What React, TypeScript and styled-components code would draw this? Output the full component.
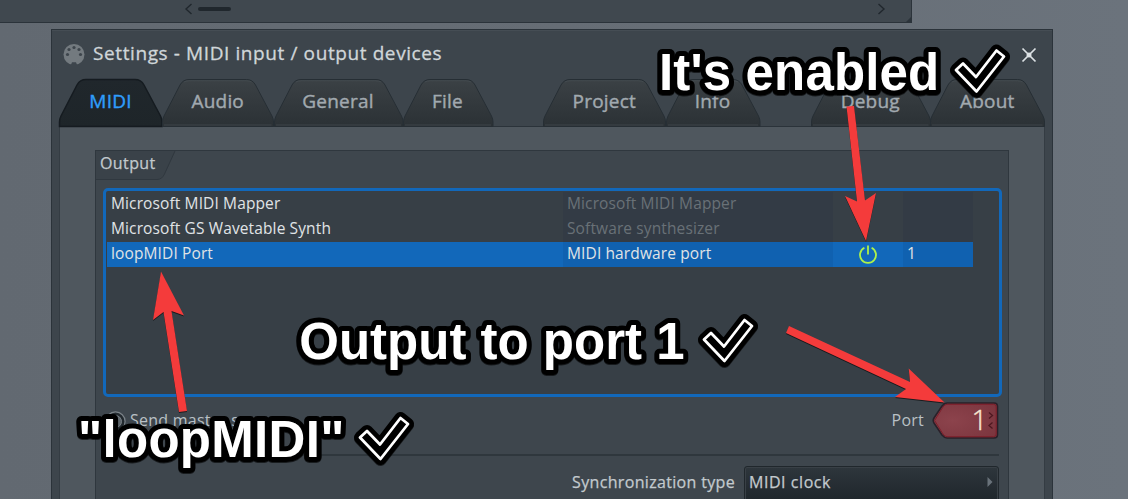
import React from "react";
import styled, { createGlobalStyle } from "styled-components";

const Global = createGlobalStyle`
  html, body { margin: 0; height: 100%; overflow: hidden; }
  * { box-sizing: border-box; }
  body { font-family: "Open Sans", "Noto Sans", sans-serif; }
`;

const Desktop = styled.div`
  position: relative;
  width: 1128px;
  height: 499px;
  overflow: hidden;
  background: linear-gradient(90deg, #626971 0%, #666d75 50%, #6b737c 100%);
`;

const BackWindow = styled.div`
  position: relative;
  display: flex;
  align-items: center;
  justify-content: space-between;
  width: 912px;
  height: 23px;
  padding: 0 25px 4px 184px;
  background: #40484f;
  border-right: 1px solid #2b333a;
  border-bottom: 1px solid #2b333a;
`;

const ResizeGrip = styled.svg`
  position: absolute;
  right: 0;
  bottom: 0;
`;

const ScrollLeft = styled.div`
  display: flex;
  align-items: center;
  gap: 5px;
`;

const Thumb = styled.div`
  width: 33px;
  height: 4px;
  border-radius: 2px;
  background: #20272d;
`;

const Window = styled.div`
  width: 1002px;
  height: 480px;
  margin: 6px 0 0 51px;
  padding: 0 7px;
  background: #3d454c;
  border: 1px solid #2b333a;
  box-shadow: inset 0 1px 0 #454d54;
`;

const TitleBar = styled.div`
  display: flex;
  align-items: center;
  height: 49px;
  padding: 0 8px 0 4px;
`;

const Title = styled.h1`
  flex: 1;
  margin: 0 0 4px 8px;
  font-size: 19px;
  font-weight: 400;
  line-height: 26px;
  letter-spacing: 0.6px;
  color: #d0d6d9;
  -webkit-text-stroke: 0.3px #d0d6d9;
`;

const Tabs = styled.div`
  display: flex;
  height: 48px;
  margin-bottom: -1px;
`;

const TabGap = styled.div<{ $w: number }>`
  width: ${(p) => p.$w}px;
`;

const TabBox = styled.div<{ $w: number; $active?: boolean }>`
  position: relative;
  width: ${(p) => p.$w}px;
  height: 48px;
  text-align: center;
  font-size: 19px;
  line-height: 45px;
  letter-spacing: 0.2px;
  color: ${(p) => (p.$active ? "#2f9dfa" : "#a1a9af")};
  -webkit-text-stroke: 0.4px ${(p) => (p.$active ? "#2f9dfa" : "#a1a9af")};
`;

const TabShape = styled.svg`
  position: absolute;
  inset: 0;
  overflow: visible;
`;

const TabText = styled.span`
  position: relative;
`;

const Panel = styled.div`
  width: 986px;
  height: 400px;
  padding: 23px 35px 0;
  background: #4f575e;
  border: 1px solid #343c43;
  border-top-color: #2b333a;
`;

const Group = styled.section`
  width: 914px;
  height: 380px;
  background: #3e464d;
  border: 1px solid #2f373e;
`;

const GroupHeader = styled.div`
  position: relative;
  height: 37px;
  padding-left: 4px;
  font-size: 16px;
  line-height: 25px;
  letter-spacing: 0.4px;
  color: #c3cace;
  -webkit-text-stroke: 0.25px #c3cace;
`;

const HeaderShape = styled.svg`
  position: absolute;
  left: 0;
  top: 0;
`;

const List = styled.div`
  width: 899px;
  height: 209px;
  margin-left: 7px;
  padding: 1px;
  background: #373f46;
  border: 3px solid #1268ba;
  border-radius: 5px;
`;

const Row = styled.div<{ $selected?: boolean }>`
  display: grid;
  grid-template-columns: 456px 270px 70px 70px;
  width: 866px;
  height: 25px;
  font-size: 15.5px;
  line-height: 23px;
  letter-spacing: 0.12px;
  color: #e0e4e6;
  background: ${(p) => (p.$selected ? "#1268ba" : "transparent")};
`;

const Cell = styled.div<{ $shade?: boolean; $dim?: boolean }>`
  display: flex;
  height: 25px;
  padding-left: 4px;
  color: ${(p) => (p.$dim ? "#697177" : "inherit")};
  background: ${(p) => (p.$shade ? "rgba(0, 20, 60, 0.07)" : "transparent")};
`;

const PowerIcon = styled.svg`
  margin: 3px 0 0 22px;
`;

const Options = styled.div`
  display: flex;
  align-items: center;
  width: 896px;
  height: 48px;
  margin-left: 7px;
  padding-left: 2px;
  font-size: 16px;
  color: #b9c0c5;
`;

const OptionText = styled.span<{ $grow?: boolean }>`
  flex: ${(p) => (p.$grow ? 1 : "none")};
  margin: 0 8px 3px 4px;
  line-height: 22px;
  letter-spacing: 0.25px;
`;

const PortField = styled.svg`
  flex: none;
  overflow: visible;
  margin-bottom: 2px;
`;

const Divider = styled.div`
  width: 896px;
  height: 2px;
  margin: 9px 0 10px 7px;
  background: #2f373d;
`;

const SyncRow = styled.div`
  display: flex;
  justify-content: flex-end;
  width: 903px;
  font-size: 16px;
  line-height: 32px;
  letter-spacing: 0.33px;
  color: #c3cace;
  -webkit-text-stroke: 0.25px #c3cace;
`;

const SyncLabel = styled.span`
  margin-right: 9px;
`;

const Select = styled.div`
  display: flex;
  align-items: center;
  justify-content: space-between;
  width: 255px;
  height: 40px;
  padding: 0 5px 8px 4px;
  letter-spacing: 0.55px;
  background: linear-gradient(#2e363c, #1f262b 34px);
  border: 1px solid #20272c;
  border-radius: 3px;
  box-shadow: inset 0 0 0 1px #394046;
`;

const Annotations = styled.svg`
  position: absolute;
  inset: 0;
  filter: drop-shadow(0.5px 1px 0.5px rgba(0, 0, 0, 0.6));
`;

const CaptionText = styled.text`
  font: bold 51px "Liberation Sans", Arial, sans-serif;
  fill: #fff;
  stroke: #000;
  stroke-width: 10px;
  stroke-linejoin: round;
  paint-order: stroke;
`;

const CHECK = "M956 70 L963 63.5 L976 77 L996.5 50.5 L1004 56.5 L976.5 91.5 Z";

function Check({ dx, dy }: { dx: number; dy: number }) {
  return (
    <g transform={`translate(${dx} ${dy})`} strokeLinejoin="round">
      <path d={CHECK} fill="#000" stroke="#000" strokeWidth="12" />
      <path d={CHECK} fill="#000" stroke="#fff" strokeWidth="2.8" />
    </g>
  );
}

function Tab({ w, label, active }: { w: number; label: string; active?: boolean }) {
  const id = `tab-${label}`;
  const d = `M0.5 47.5 V43 Q0.5 40 2 37 L18 6 Q21 0.5 27 0.5 H${w - 27} Q${w - 21} 0.5 ${w - 18} 6 L${w - 1.5} 37 Q${w} 40 ${w} 43 V47.5 Z`;
  return (
    <TabBox $w={w} $active={active}>
      <TabShape width={w} height="48">
        <defs>
          <linearGradient id={id} x1="0" y1="0" x2="0" y2="1">
            <stop offset="0" stopColor={active ? "#20272c" : "#3b4145"} />
            <stop offset="1" stopColor={active ? "#1e2529" : "#2b3135"} />
          </linearGradient>
        </defs>
        <path d={d} fill={`url(#${id})`} stroke={active ? "#151b20" : "#262e34"} strokeWidth={active ? 1.5 : 1} />
        {!active && <path d={`M22 3 Q24 1.8 27 1.8 H${w - 27} Q${w - 24} 1.8 ${w - 22} 3 M2 46 H${w - 2}`} fill="none" stroke="#495157" strokeOpacity="0.6" />}
      </TabShape>
      <TabText>{label}</TabText>
    </TabBox>
  );
}

function Power() {
  return (
    <PowerIcon width="18" height="19" viewBox="0 0 18 19" fill="none" stroke="#aef24a" strokeWidth="1.8">
      <path d="M5.4 2.8 A8 8 0 1 0 12.6 2.8" />
      <path d="M9 0.5 V9.5" />
    </PowerIcon>
  );
}

function MidiIcon() {
  const pins = [[4.5, 11], [6, 6], [11, 4], [16, 6], [17.5, 11]];
  return (
    <svg width="22" height="22" viewBox="0 0 22 22">
      <circle cx="11" cy="10.5" r="10.5" fill="#737a7f" />
      {pins.map(([x, y]) => (
        <circle key={`${x}-${y}`} cx={x} cy={y - 0.5} r="1.6" fill="#3d454c" />
      ))}
      <path d="M7.5 22 L9 18.3 H13 L14.5 22 Z" fill="#3d454c" />
    </svg>
  );
}

export default function App() {
  return (
    <Desktop>
      <Global />
      <BackWindow>
        <ScrollLeft>
          <svg width="9" height="12" fill="none" stroke="#20272d" strokeWidth="1.4">
            <path d="M7.5 1 L2 6 L7.5 11" />
          </svg>
          <Thumb />
        </ScrollLeft>
        <svg width="9" height="12" fill="none" stroke="#20272d" strokeWidth="1.4">
          <path d="M1.5 1 L7 6 L1.5 11" />
        </svg>
        <ResizeGrip width="5" height="5">
          <path d="M5 0 V5 H0 Z" fill="#2b333a" />
        </ResizeGrip>
      </BackWindow>
      <Window>
        <TitleBar>
          <MidiIcon />
          <Title>Settings - MIDI input / output devices</Title>
          <svg width="16" height="16" stroke="#dce1e4" strokeWidth="1.7">
            <path d="M1.5 1.5 L14.5 14.5 M14.5 1.5 L1.5 14.5" />
            <circle cx="8" cy="8" r="2.5" fill="#dce1e4" stroke="none" />
          </svg>
        </TitleBar>
        <Tabs>
          <Tab w={103} label="MIDI" active />
          <Tab w={111.5} label="Audio" />
          <Tab w={129} label="General" />
          <Tab w={90} label="File" />
          <TabGap $w={50.5} />
          <Tab w={122.5} label="Project" />
          <Tab w={94} label="Info" />
          <TabGap $w={51} />
          <Tab w={119.5} label="Debug" />
          <Tab w={114.5} label="About" />
        </Tabs>
        <Panel>
          <Group>
            <GroupHeader>
              <HeaderShape width="82" height="30">
                <path d="M0 0 H79 L68.5 23 Q66 28.5 61 28.5 H0 Z" fill="#3a4249" />
                <path d="M79 0 L68.5 23 Q66 28.5 61 28.5 H0" fill="none" stroke="#30383f" />
              </HeaderShape>
              <TabText>Output</TabText>
            </GroupHeader>
            <List>
              <Row>
                <Cell>Microsoft MIDI Mapper</Cell>
                <Cell $shade $dim>Microsoft MIDI Mapper</Cell>
                <Cell />
                <Cell $shade />
              </Row>
              <Row>
                <Cell>Microsoft GS Wavetable Synth</Cell>
                <Cell $shade $dim>Software synthesizer</Cell>
                <Cell />
                <Cell $shade />
              </Row>
              <Row $selected>
                <Cell>loopMIDI Port</Cell>
                <Cell $shade>MIDI hardware port</Cell>
                <Cell><Power /></Cell>
                <Cell $shade>1</Cell>
              </Row>
            </List>
            <Options>
              <svg width="21" height="21">
                <circle cx="10.5" cy="10.5" r="9.6" fill="#22292e" stroke="#7a8288" strokeWidth="1.2" />
                <circle cx="10.5" cy="10.5" r="6" fill="#5d656b" stroke="#7a8288" />
              </svg>
              <OptionText $grow>Send master sync</OptionText>
              <OptionText>Port</OptionText>
              <PortField width="67" height="37" viewBox="0 0 67 37">
                <defs>
                  <radialGradient id="port" cx="0.3" cy="0.5" r="0.8">
                    <stop offset="0" stopColor="#8c434c" />
                    <stop offset="1" stopColor="#7b353e" />
                  </radialGradient>
                </defs>
                <path d="M1.2 18.5 Q1.2 17.5 2 16 L10 4 Q12.5 1 15 1 H62 Q65.5 1 65.5 4.5 V32.5 Q65.5 36 62 36 H15 Q12.5 36 10 33 L2 21 Q1.2 19.5 1.2 18.5 Z" fill="url(#port)" stroke="#2a2029" strokeWidth="1.6" />
                <path d="M2.6 18.5 L11 5 Q13 2.3 15 2.3 H61.5 Q64.2 2.3 64.2 5 V32 Q64.2 34.7 61.5 34.7 H15 Q13 34.7 11 32 Z" fill="none" stroke="#7d1f2b" strokeWidth="1" />
                <path d="M57 10.5 L60.5 13.5 L57 16.5 M60.5 20.5 L57 23.5 L60.5 26.5" fill="none" stroke="#4e1820" strokeWidth="1.3" />
                <text x="39.5" y="28" fontSize="28" fontWeight="300" fill="#f6e5cf" stroke="#f6e5cf" strokeWidth="0.4">1</text>
              </PortField>
            </Options>
            <Divider />
            <SyncRow>
              <SyncLabel>Synchronization type</SyncLabel>
              <Select>
                MIDI clock
                <svg width="6" height="10">
                  <path d="M0.5 0 L5.5 5 L0.5 10 Z" fill="#69727a" />
                </svg>
              </Select>
            </SyncRow>
          </Group>
        </Panel>
      </Window>
      <Annotations width="1128" height="499">
        <g fill="#f43b3b">
          <path d="M846.5 106.5 L854 106 L865 200.5 L876 193 L866 241 L845 196 L857 201.5 Z" />
          <path d="M187 411 L179 412 L163.5 312 L153 320 L161 271.5 L184 315.5 L171.5 311 Z" />
          <path d="M789 326 L786 333 L906 389 L895 397 L944.5 402.5 L908.7 368.5 L910 382 Z" />
        </g>
        <CaptionText x="659" y="90" letterSpacing="0.15">It&apos;s enabled</CaptionText>
        <CaptionText x="299.3" y="359">Output to port 1</CaptionText>
        <CaptionText x="78" y="457" letterSpacing="0.3">&quot;loopMIDI&quot;</CaptionText>
        <Check dx={0} dy={0} />
        <Check dx={-252} dy={269.5} />
        <Check dx={-596} dy={367.5} />
      </Annotations>
    </Desktop>
  );
}
